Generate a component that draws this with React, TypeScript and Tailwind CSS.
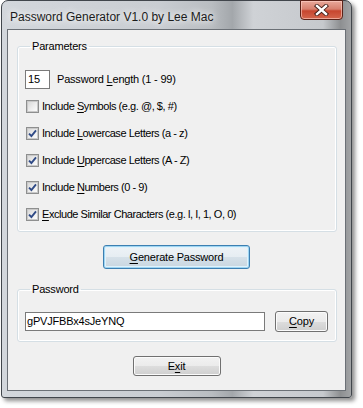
import type { ReactNode } from "react";

// Win7 "Aero basic"-ish dialog: Password Generator V1.0 by Lee Mac

function U({ children }: { children: ReactNode }) {
  return <span className="underline decoration-1 underline-offset-[2px]">{children}</span>;
}

function Check({ checked, label }: { checked?: boolean; label: ReactNode }) {
  return (
    <div className="flex h-[27px] items-center pl-[1px]">
      <span className="flex h-[13px] w-[13px] items-center justify-center border border-[#8e8f8f] bg-[#f4f4f4]">
        <span className="flex h-[11px] w-[11px] items-center justify-center border border-[#c9c9c9] bg-[linear-gradient(135deg,#d9d9d9_0%,#eeeeee_55%,#fbfbfb_100%)]">
          {checked && (
            <svg width="9" height="9" viewBox="0 0 9 9">
              <path d="M1 4.6 L3.4 7 L8 1.4" fill="none" stroke="#2f4a86" strokeWidth="1.9" />
            </svg>
          )}
        </span>
      </span>
      <span className="ml-[3px] tracking-[-0.45px]">{label}</span>
    </div>
  );
}

function Button({
  w,
  h,
  primary,
  children,
  className = "",
}: {
  w: string;
  h: string;
  primary?: boolean;
  children: ReactNode;
  className?: string;
}) {
  const skin = primary
    ? "border-[#3c7fb1] bg-[linear-gradient(#eef3f7_0%,#e6edf2_50%,#d6e1e9_50%,#c8d6e0_100%)] shadow-[inset_0_0_0_1px_#9fd5f2,inset_0_0_0_2px_#e0f2fb]"
    : "border-[#707070] bg-[linear-gradient(#f2f2f2_0%,#ebebeb_50%,#dddddd_50%,#cfcfcf_100%)] shadow-[inset_0_0_0_1px_#fbfbfb]";
  return (
    <button
      type="button"
      className={`flex items-center justify-center rounded-[3px] border text-[11px] text-black ${skin} ${w} ${h} ${className}`}
    >
      {children}
    </button>
  );
}

export default function App() {
  return (
    <div className="h-[408px] w-[363px] bg-white pl-[1px] font-['Liberation_Sans',Arial,sans-serif] text-[11px] tracking-[-0.2px] text-black">
      <div className="flex h-[398px] w-[351px] flex-col rounded-t-[7px] rounded-b-[3px] border border-[#41464c] bg-[linear-gradient(to_right,#d3d7dc_0%,#c9cdd2_45%,#b9bdc1_60%,#a3a7ab_66%,#cfd2d6_72%,#c6c9cd_92%,#8d8f91_97%,#a2a4a6_100%)] px-[5px] pb-[6px] shadow-[3px_3px_4px_rgba(0,0,0,0.45)]">
        {/* title bar */}
        <div className="flex h-[28px] items-start justify-between">
          <span className="mt-[7px] pl-[3px] text-[12px] tracking-normal text-[#1b1b1b] [text-shadow:0_0_6px_#fff,0_0_10px_rgba(255,255,255,0.9)]">
            Password Generator V1.0 by Lee Mac
          </span>
          <div className="-mt-px mr-[3px] flex h-[20px] w-[43px] items-center justify-center rounded-b-[4px] border border-[#5b2218] bg-[linear-gradient(#e9a99b_0%,#d7806e_45%,#c7462f_55%,#d4664d_100%)] shadow-[inset_0_0_0_1px_rgba(255,210,200,0.6)]">
            <svg width="15" height="12" viewBox="0 0 15 12">
              <path d="M3 2 L12 10 M12 2 L3 10" stroke="#3d1a14" strokeWidth="4.2" strokeLinecap="square" />
              <path d="M3 2 L12 10 M12 2 L3 10" stroke="#ffffff" strokeWidth="2.4" strokeLinecap="square" />
            </svg>
          </div>
        </div>

        {/* client area */}
        <div className="flex flex-1 flex-col border border-[#6b7076] bg-[#f0f0f0] pt-[10px]">
          <fieldset className="ml-[9px] mr-[8px] rounded-[3px] border border-[#d5dfe5] pb-[3px] pl-[7px] shadow-[inset_0_0_0_1px_#ffffff]">
            <legend className="ml-[5px] px-[2px] leading-[13px]">Parameters</legend>
            <div className="flex flex-col pt-[13px]">
              <div className="flex h-[27px] items-center">
                <span className="flex h-[19px] w-[25px] items-center border border-[#7a7a7a] bg-white pl-[2px]">15</span>
                <span className="ml-[7px]">
                  Password <U>L</U>ength (1 - 99)
                </span>
              </div>
              <Check label={<>Include <U>S</U>ymbols (e.g. @, $, #)</>} />
              <Check checked label={<>Include <U>L</U>owercase Letters (a - z)</>} />
              <Check checked label={<>Include <U>U</U>ppercase Letters (A - Z)</>} />
              <Check checked label={<>Include <U>N</U>umbers (0 - 9)</>} />
              <Check checked label={<><U>E</U>xclude Similar Characters (e.g. l, I, 1, O, 0)</>} />
            </div>
          </fieldset>

          <Button primary w="w-[147px]" h="h-[24px]" className="mx-auto mt-[13px]">
            <U>G</U>enerate Password
          </Button>

          <fieldset className="ml-[9px] mr-[8px] mt-[14px] rounded-[3px] border border-[#d5dfe5] pb-[9px] pl-[7px] shadow-[inset_0_0_0_1px_#ffffff]">
            <legend className="ml-[5px] px-[2px] leading-[13px]">Password</legend>
            <div className="flex items-center pt-[15px]">
              <span className="flex h-[19px] w-[240px] items-center border border-[#7a7a7a] bg-white pl-[1px]">
                gPVJFBBx4sJeYNQ
              </span>
              <Button w="w-[53px]" h="h-[21px]" className="ml-[10px]">
                <U>C</U>opy
              </Button>
            </div>
          </fieldset>

          <Button w="w-[88px]" h="h-[20px]" className="mx-auto mt-[14px]">
            E<U>x</U>it
          </Button>
        </div>
      </div>
    </div>
  );
}
